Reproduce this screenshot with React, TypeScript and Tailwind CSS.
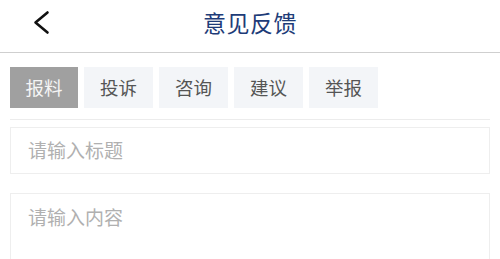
const TABS = ["报料", "投诉", "咨询", "建议", "举报"];

const font = "font-['Noto_Sans_CJK_SC','Noto_Sans',sans-serif]";

export default function App() {
  return (
    <div className={`w-[500px] h-[259px] overflow-hidden bg-white ${font}`}>
      {/* Header */}
      <div className="relative flex h-[53px] items-center justify-center border-b border-[#cfcfcf]">
        <button className="absolute left-[30px] top-[9px] flex h-[28px] w-[22px] items-center justify-center">
          <svg width="22" height="28" viewBox="0 0 22 28" fill="none">
            <polyline
              points="17.5,3.5 5.5,13.5 17.5,23.5"
              stroke="#111"
              strokeWidth="2.6"
              strokeLinecap="round"
              strokeLinejoin="round"
            />
          </svg>
        </button>
        <h1 className="-mt-[8px] text-[23px] leading-none tracking-[0.5px] text-[#1e3c78]">
          意见反馈
        </h1>
      </div>

      {/* Tabs */}
      <div className="mx-[10px] flex gap-[6px] border-b border-[#ececec] pt-[14px] pb-[11px]">
        {TABS.map((t, i) => (
          <div
            key={t}
            className={
              i === 0
                ? "flex h-[41px] w-[68px] items-center justify-center bg-[#a0a0a0] text-[18.5px] text-[#f5f5f5]"
                : "flex h-[41px] w-[69px] items-center justify-center bg-[#f3f5f8] text-[18.5px] text-[#555]"
            }
          >
            {t}
          </div>
        ))}
      </div>

      {/* Title input */}
      <div className="mx-[10px] mt-[7px] flex h-[47px] items-center border border-[#eeeeee] px-[17px]">
        <input
          placeholder="请输入标题"
          className="w-full bg-transparent text-[19px] text-[#333] outline-none placeholder:text-[#b0b0b0]"
        />
      </div>

      {/* Content */}
      <div className="mx-[10px] mt-[19px] h-[90px] border border-[#eeeeee] px-[17px] pt-[9px]">
        <textarea
          placeholder="请输入内容"
          rows={3}
          className="w-full resize-none bg-transparent text-[19px] text-[#333] outline-none placeholder:text-[#b0b0b0]"
        />
      </div>
    </div>
  );
}
